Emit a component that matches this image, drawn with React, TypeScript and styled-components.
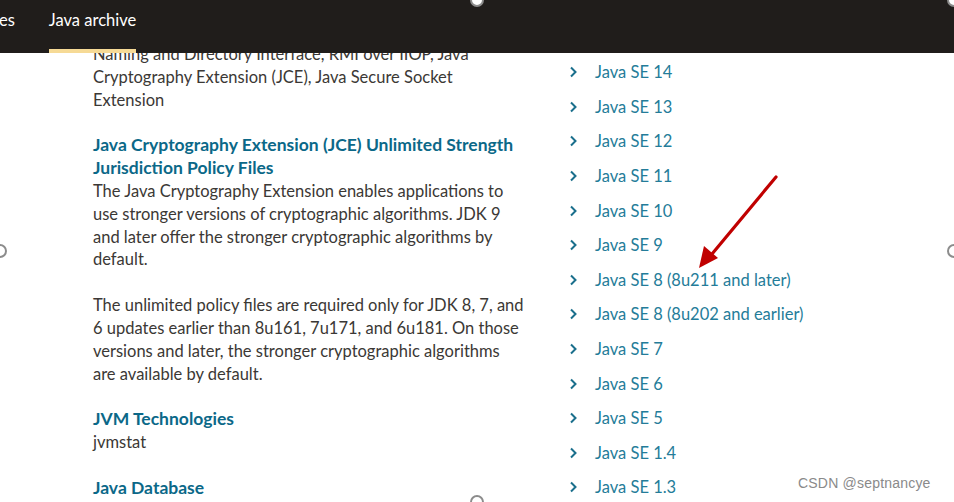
import React from 'react';
import styled, { createGlobalStyle } from 'styled-components';

const GlobalStyle = createGlobalStyle`
  html, body {
    margin: 0;
    padding: 0;
    background: #ffffff;
  }
  body {
    font-family: Lato, "Open Sans", sans-serif;
  }
`;

const RELEASES = [
  'Java SE 14',
  'Java SE 13',
  'Java SE 12',
  'Java SE 11',
  'Java SE 10',
  'Java SE 9',
  'Java SE 8 (8u211 and later)',
  'Java SE 8 (8u202 and earlier)',
  'Java SE 7',
  'Java SE 6',
  'Java SE 5',
  'Java SE 1.4',
  'Java SE 1.3',
];

// paragraphs kept with the same line breaks as the page
const Lines: React.FC<{ lines: string[] }> = ({ lines }) => (
  <>
    {lines.map((l, i) => (
      <React.Fragment key={i}>
        {l}
        {i < lines.length - 1 && <br />}
      </React.Fragment>
    ))}
  </>
);

const Chevron: React.FC = () => (
  <svg width="10" height="12" viewBox="0 0 10 12" aria-hidden="true">
    <path d="M3 1.5 L7.5 6 L3 10.5" fill="none" stroke="#1a6f8c" strokeWidth="2" />
  </svg>
);

const Handle: React.FC<{ x: number; y: number }> = ({ x, y }) => (
  <HandleDot style={{ left: x - 7, top: y - 7 }} />
);

export default function App() {
  return (
    <>
      <GlobalStyle />
      <Page>
        <Header>
          <Tab>es</Tab>
          <Tab $active>Java archive</Tab>
        </Header>

        <Content>
          <LeftColumn>
            <Section>
              <Body>
                <Lines
                  lines={[
                    'Naming and Directory Interface, RMI over IIOP, Java',
                    'Cryptography Extension (JCE), Java Secure Socket',
                    'Extension',
                  ]}
                />
              </Body>
            </Section>
            <Section>
              <Heading href="#">
                <Lines
                  lines={[
                    'Java Cryptography Extension (JCE) Unlimited Strength',
                    'Jurisdiction Policy Files',
                  ]}
                />
              </Heading>
              <Body>
                <Lines
                  lines={[
                    'The Java Cryptography Extension enables applications to',
                    'use stronger versions of cryptographic algorithms. JDK 9',
                    'and later offer the stronger cryptographic algorithms by',
                    'default.',
                  ]}
                />
              </Body>
              <Body>
                <Lines
                  lines={[
                    'The unlimited policy files are required only for JDK 8, 7, and',
                    '6 updates earlier than 8u161, 7u171, and 6u181. On those',
                    'versions and later, the stronger cryptographic algorithms',
                    'are available by default.',
                  ]}
                />
              </Body>
            </Section>
            <Section>
              <Heading href="#">JVM Technologies</Heading>
              <Body>jvmstat</Body>
            </Section>
            <Section>
              <Heading href="#">Java Database</Heading>
            </Section>
          </LeftColumn>

          <ReleaseList>
            {RELEASES.map((r) => (
              <ReleaseItem key={r}>
                <Chevron />
                <ReleaseLink href="#">{r}</ReleaseLink>
              </ReleaseItem>
            ))}
          </ReleaseList>
        </Content>

        <Arrow width="954" height="502" viewBox="0 0 954 502" aria-hidden="true">
          <line x1="776" y1="177" x2="712" y2="254" stroke="#c00000" strokeWidth="3.2" strokeLinecap="round" />
          <polygon points="699,268 704,246 718,258" fill="#c00000" />
        </Arrow>

        <Watermark>CSDN @septnancye</Watermark>

        <Handle x={477} y={0} />
        <Handle x={0} y={251} />
        <Handle x={954} y={251} />
        <Handle x={477} y={502} />
        <Handle x={954} y={0} />
      </Page>
    </>
  );
}

const Page = styled.div`
  position: relative;
  width: 954px;
  height: 502px;
  overflow: hidden;
  background: #ffffff;
`;

const Header = styled.div`
  position: absolute;
  top: 0;
  left: 0;
  right: 0;
  height: 53px;
  z-index: 2;
  background: #201d1b;
  display: flex;
  align-items: stretch;
  gap: 34px;
  margin-left: -1px;
`;

const Tab = styled.div<{ $active?: boolean }>`
  position: relative;
  display: flex;
  align-items: flex-start;
  padding-top: 10px;
  color: #ffffff;
  font-size: 16.5px;
  white-space: nowrap;

  &::after {
    content: '';
    display: ${(p) => (p.$active ? 'block' : 'none')};
    position: absolute;
    left: 0;
    right: 0;
    bottom: 0;
    height: 4px;
    background: #f6da96;
  }
`;

const Content = styled.div`
  display: flex;
  padding-top: 43px;
`;

const LeftColumn = styled.div`
  width: 440px;
  margin-left: 93px;
  flex-shrink: 0;
  display: flex;
  flex-direction: column;
  gap: 23px;
`;

const Section = styled.div`
  display: flex;
  flex-direction: column;
  gap: 23px;
`;

const Heading = styled.a`
  color: #0b6888;
  font-weight: 700;
  font-size: 17.5px;
  line-height: 22.8px;
  text-decoration: none;
  white-space: nowrap;
  margin-bottom: -23px;
`;

const Body = styled.p`
  margin: 0;
  color: #3b3835;
  font-size: 16.5px;
  line-height: 22.8px;
  white-space: nowrap;
`;

const ReleaseList = styled.ul`
  list-style: none;
  margin: 12px 0 0 35px;
  padding: 0;
  display: flex;
  flex-direction: column;
`;

const ReleaseItem = styled.li`
  display: flex;
  align-items: center;
  gap: 17px;
  height: 34.6px;
`;

const ReleaseLink = styled.a`
  color: #247c99;
  font-size: 16.5px;
  text-decoration: none;
  white-space: nowrap;
`;

const Arrow = styled.svg`
  position: absolute;
  top: 0;
  left: 0;
  pointer-events: none;
  z-index: 3;
`;

const Watermark = styled.div`
  position: absolute;
  left: 798px;
  top: 475px;
  color: #8a8a8a;
  font-family: "Liberation Sans", Arial, sans-serif;
  font-size: 14px;
  letter-spacing: 0.2px;
  z-index: 3;
`;

const HandleDot = styled.div`
  position: absolute;
  width: 10px;
  height: 10px;
  border-radius: 50%;
  border: 2px solid #8c8c8c;
  background: #ffffff;
  z-index: 4;
`;
